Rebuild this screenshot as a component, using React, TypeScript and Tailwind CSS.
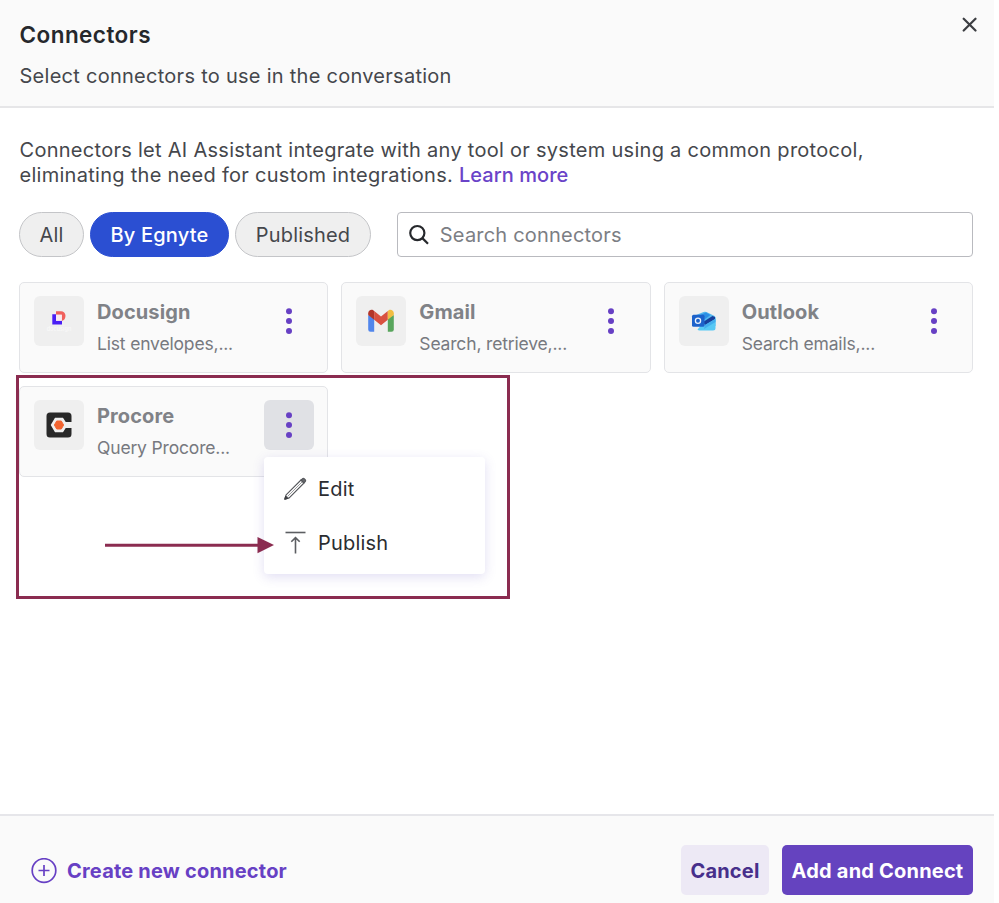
import React, { useState } from 'react';

interface Connector {
  id: string;
  name: string;
  description: string;
  logo: React.ReactNode;
  menuOpen?: boolean;
}

const DocusignLogo = () => (
  <svg width="50" height="50" viewBox="0 0 50 50">
    <path d="M22 15.200h5a4.500 4.500 0 0 1 4.500 4.500c0 2.700-1.300 4.600-3.700 5.400v-6.400H22z" fill="#f0605c" />
    <path d="M18.300 18.200H22v6.600h6v3.800h-9.700z" fill="#4a1ff5" />
    <path d="M22 18.700h5.800v6.100H22z" fill="#fbe9ee" />
    <text x="25" y="34.500" textAnchor="middle" fontSize="5.500" fontWeight="600" fill="#f8f8f8" fontFamily="Inter, sans-serif">docusign</text>
  </svg>
);

const GmailLogo = () => (
  <svg width="50" height="50" viewBox="0 0 50 50">
    <path d="M12.200 19l6 3v13.800h-3.700a2.300 2.300 0 0 1-2.300-2.300z" fill="#5186ec" />
    <path d="M37.800 19l-6 3v13.800h3.700a2.300 2.300 0 0 0 2.300-2.300z" fill="#58a55c" />
    <path d="M18.200 15l6.800 5.500 6.800-5.500v8.700L25 29.200l-6.800-5.500z" fill="#d95140" />
    <path d="M31.800 23.700V15l1-.7c2-1.200 5 .2 5 3v1.700z" fill="#f1bd42" />
    <path d="M18.200 23.700V15l-1-.7c-2-1.200-5 .2-5 3v1.700z" fill="#b33529" />
  </svg>
);

const OutlookLogo = () => (
  <svg width="50" height="50" viewBox="0 0 50 50">
    <path d="M16 19.500l8.500-3.500q1.500-.6 3 .1l7.500 3.600q1.500.8 1.500 2.300v8L18 30z" fill="#55b8ee" />
    <path d="M20 19.600l7-3 4.500 2.300L22 26z" fill="#2c8fe5" />
    <path d="M22 29.500L36.500 21v11a2.500 2.500 0 0 1-2.500 2.500H20.500a2.500 2.500 0 0 1-2-1z" fill="#57c9f5" />
    <path d="M24 26l9.500-6 2.500 1v2L26 29z" fill="#173f9c" />
    <path d="M26 29l10.500-6v3L25 33z" fill="#43aeee" />
    <rect x="13" y="18.800" width="12.500" height="12" rx="1.500" fill="#1c62cb" />
    <circle cx="19" cy="24.800" r="2.600" fill="none" stroke="#e8f1fc" strokeWidth="1.300" />
  </svg>
);

const ProcoreLogo = () => (
  <svg width="50" height="50" viewBox="0 0 50 50">
    <path d="M16 12.500h18a3.500 3.500 0 0 1 3.500 3.500v6h-5.800L29 17.700h-8L16.700 25 21 32.300h8l2.700-4.300h5.800v6a3.500 3.500 0 0 1-3.500 3.500H16a3.500 3.500 0 0 1-3.500-3.500V16a3.500 3.500 0 0 1 3.500-3.500z" fill="#282828" />
    <path d="M22.700 21h4.600L29.600 25l-2.300 4h-4.600L20.400 25z" fill="#f26430" stroke="#f26430" strokeLinejoin="round" />
  </svg>
);

const DotsIcon = () => (
  <svg width="50" height="50" viewBox="0 0 50 50" fill="#6740c4">
    <circle cx="25" cy="15.200" r="3" />
    <circle cx="25" cy="25.100" r="3" />
    <circle cx="25" cy="35" r="3" />
  </svg>
);

const SearchIcon = () => (
  <svg width="22" height="22" viewBox="0 0 22 22" fill="none" stroke="#26282c" strokeWidth="2.300">
    <circle cx="8.800" cy="9" r="7.500" />
    <path d="M14.100 14.300l6 6" />
  </svg>
);

const PencilIcon = () => (
  <svg width="24" height="24" viewBox="0 0 24 24" fill="none" stroke="#55575b" strokeWidth="1.100" strokeLinejoin="round">
    <path d="M1.800 22.200l1.300-4.400L18 3l3 3L6.200 20.900z" />
    <path d="M4.500 19.500L19 5" strokeWidth=".6" />
    <path d="M18 3l1.300-1.200a1.500 1.500 0 0 1 2.100 0l.8.800a1.500 1.500 0 0 1 0 2.100L21 6z" fill="#66686c" />
    <path d="M1.800 22.200l.9-3 2.100 2.100z" fill="#3c3e42" stroke="#3c3e42" />
  </svg>
);

const PublishIcon = () => (
  <svg width="24" height="24" viewBox="0 0 24 24" fill="none" stroke="#5c5e62" strokeWidth="1.600">
    <path d="M2.500 1.500h20" />
    <path d="M12.500 22.500V7M8.300 10.800l4.200-4.200 4.200 4.200" />
  </svg>
);

const connectors: Connector[] = [
  { id: 'docusign', name: 'Docusign', description: 'List envelopes,...', logo: <DocusignLogo /> },
  { id: 'gmail', name: 'Gmail', description: 'Search, retrieve,...', logo: <GmailLogo /> },
  { id: 'outlook', name: 'Outlook', description: 'Search emails,...', logo: <OutlookLogo /> },
  { id: 'procore', name: 'Procore', description: 'Query Procore...', logo: <ProcoreLogo />, menuOpen: true },
];

function ConnectorMenu() {
  return (
    <div className="absolute left-[244px] top-[70px] z-10 flex h-[117px] w-[221px] flex-col gap-[24px] rounded bg-white pl-[19px] pt-[17px] shadow-[0_3px_12px_rgba(90,70,190,0.18)]">
      <button className="flex h-[30px] items-center gap-[11px] text-[20px] tracking-[0.2px] text-[#2b2d31]">
        <PencilIcon />
        Edit
      </button>
      <button className="flex h-[30px] items-center gap-[11px] text-[20px] tracking-[0.2px] text-[#2b2d31]">
        <PublishIcon />
        Publish
      </button>
    </div>
  );
}

/* Frame and arrow that call out the Publish action */
function Callout() {
  return (
    <div className="pointer-events-none absolute left-[-4px] top-[-12px] z-20 h-[224px] w-[494px] border-[3px] border-[#8b2c50]">
      <svg className="absolute left-[86px] top-[158px]" width="170" height="18" viewBox="0 0 170 18">
        <path d="M0 9.200h155" stroke="#8b2c50" strokeWidth="3" />
        <path d="M152.500 1l16.500 8-16.500 8.200z" fill="#8b2c50" />
      </svg>
    </div>
  );
}

function ConnectorCard({ item }: { item: Connector }) {
  return (
    <div className="relative flex h-[91px] rounded-[5px] border-[1.500px] border-[#e3e4e7] bg-[#fafafa] pl-[14px] pt-[13px]">
      <div className="h-[50px] w-[50px] shrink-0 overflow-hidden rounded-[6px] bg-[#efefef]">{item.logo}</div>
      <div className="ml-[13px] w-[154px] whitespace-nowrap">
        <h3 className="mt-px text-[20px] font-bold leading-[30px] tracking-[0.1px] text-[#808287]">{item.name}</h3>
        <p className="mt-[4px] text-[17.500px] leading-[26px] tracking-[-0.170px] text-[#77797f]">{item.description}</p>
      </div>
      <button className={`ml-[13px] h-[50px] w-[50px] rounded-[6px] ${item.menuOpen ? 'bg-[#e0e1e5]' : ''}`}>
        <DotsIcon />
      </button>
      {item.menuOpen && <ConnectorMenu />}
      {item.menuOpen && <Callout />}
    </div>
  );
}

const filters = [
  { label: 'All', width: 'w-[65px]' },
  { label: 'By Egnyte', width: 'w-[139px]' },
  { label: 'Published', width: 'w-[136px]' },
];

export default function App() {
  const [active, setActive] = useState('By Egnyte');

  return (
    <div className="h-[903px] w-[999px] overflow-hidden bg-white font-['Inter',sans-serif]">
      <div className="flex h-full w-[994px] flex-col">
        <header className="flex h-[108px] shrink-0 justify-between border-b-2 border-[#e6e6e8] bg-[#fafafa] pl-[19.500px] pr-[17px]">
          <div className="whitespace-nowrap">
            <h1 className="mt-[20px] text-[22.500px] font-semibold leading-[30px] tracking-[0.450px] text-[#26282c]">Connectors</h1>
            <p className="mt-[11px] text-[20px] leading-[30px] tracking-[0.270px] text-[#45474c]">Select connectors to use in the conversation</p>
          </div>
          <button className="mt-[17px] h-[15px]" aria-label="Close">
            <svg width="15" height="15" viewBox="0 0 15 15" stroke="#3c3e42" strokeWidth="2.200" strokeLinecap="round">
              <path d="M1.700 1.700l11.800 11.800M13.500 1.700L1.700 13.500" />
            </svg>
          </button>
        </header>

        <main className="flex-1 pl-[19px] pr-[21px] pt-[30px]">
          <p className="ml-[0.500px] whitespace-nowrap text-[20px] leading-[25px] tracking-[0.280px] text-[#45474c]">
            Connectors let AI Assistant integrate with any tool or system using a common protocol,
            <br />
            eliminating the need for custom integrations.{' '}
            <a href="#" className="font-medium tracking-[0.050px] text-[#6a43c8]">Learn more</a>
          </p>

          <div className="mt-[24px] flex h-[45px]">
            <div className="flex gap-[6px]">
              {filters.map(({ label, width }) => (
                <button
                  key={label}
                  onClick={() => setActive(label)}
                  className={`${width} h-full rounded-full border-[1.500px] text-[20px] tracking-[0.2px] whitespace-nowrap ${
                    active === label
                      ? 'border-[#2b4fd2] bg-[#2b4fd2] font-medium text-white'
                      : 'border-[#c4c5c8] bg-[#efefef] text-[#45474c]'
                  }`}
                >
                  {label}
                </button>
              ))}
            </div>
            <div className="ml-[26px] flex flex-1 items-center gap-[10px] rounded-[4px] border-[1.500px] border-[#b9babf] bg-white pl-[11px]">
              <SearchIcon />
              <input
                className="w-full bg-transparent text-[20px] tracking-[0.2px] outline-none placeholder:text-[#7c7e84]"
                placeholder="Search connectors"
              />
            </div>
          </div>

          <div className="mt-[25px] grid grid-cols-3 gap-[13px]">
            {connectors.map(item => (
              <ConnectorCard key={item.id} item={item} />
            ))}
          </div>
        </main>

        <footer className="flex h-[89px] shrink-0 items-start justify-between border-t-2 border-[#e6e6ea] bg-[#fafafa] pl-[31px] pr-[21px] pt-[29px]">
          <button className="flex h-[50px] items-center gap-[10px] whitespace-nowrap pt-px text-[20px] font-bold tracking-[0.2px] text-[#6740c4]">
            <svg width="26" height="26" viewBox="0 0 26 26" fill="none" stroke="#6740c4" strokeWidth="1.700">
              <circle cx="13" cy="12.500" r="11.800" />
              <path d="M13 7v11M7.500 12.500h11" />
            </svg>
            Create new connector
          </button>
          <div className="flex gap-[13px] whitespace-nowrap text-[20px] font-bold tracking-[0.2px]">
            <button className="h-[50px] w-[88px] rounded-[5px] bg-[#ede9f5] pt-px text-[#472f8b]">Cancel</button>
            <button className="h-[50px] w-[191px] rounded-[5px] bg-[#6543bf] pt-px text-white">Add and Connect</button>
          </div>
        </footer>
      </div>
    </div>
  );
}
